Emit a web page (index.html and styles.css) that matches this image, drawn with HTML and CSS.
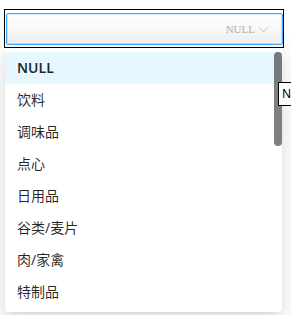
FILE: index.html
```html
<!DOCTYPE html>
<html lang="zh">
<head>
  <meta charset="UTF-8">
  <title>类别选择</title>
  <link rel="stylesheet" href="styles.css">
</head>
<body>
  <div class="frame">
    <div class="select">
      <span class="select-value">NULL</span>
      <svg class="select-arrow" width="11" height="7" viewBox="0 0 11 7">
        <path d="M0.5 0.8 L5.5 5.8 L10.5 0.8" fill="none" stroke="#bfbfbf" stroke-width="1"/>
      </svg>
    </div>
  </div>

  <div class="dropdown">
    <div class="option-list">
      <div class="option active">NULL</div>
      <div class="option">饮料</div>
      <div class="option">调味品</div>
      <div class="option">点心</div>
      <div class="option">日用品</div>
      <div class="option">谷类/麦片</div>
      <div class="option">肉/家禽</div>
      <div class="option">特制品</div>
    </div>
    <div class="scroll-thumb"></div>
  </div>

  <div class="tooltip">N</div>
</body>
</html>
```

FILE: styles.css
```css
body {
  margin: 0;
  background: #fff;
  font-family: "Noto Sans", "Noto Sans CJK SC", sans-serif;
  overflow: hidden;
}
.frame {
  margin: 9px 0 0 4px;
  width: 278px;
  height: 37px;
  border: 1px solid #000;
  padding: 0;
  box-sizing: content-box;
}
.select {
  margin: 3px 0 0 1px;
  width: 277px;
  height: 32px;
  box-sizing: border-box;
  border: 1px solid #40a9ff;
  border-radius: 2px;
  box-shadow: inset 0 0 0 1px rgba(64, 169, 255, 0.25);
  background: linear-gradient(to bottom, #fff, #f1f1f1);
  display: flex;
  align-items: center;
  justify-content: flex-end;
  gap: 3px;
  padding-right: 13px;
}
.select-value {
  font-family: "Liberation Serif", serif;
  font-size: 11px;
  color: #b0b0b0;
}
.select-arrow {
  display: block;
}
.dropdown {
  position: absolute;
  left: 5px;
  top: 48px;
  width: 277px;
  padding: 4px 0;
  background: #fff;
  border-radius: 2px 2px 4px 4px;
  box-shadow: 0 3px 6px -4px rgba(0, 0, 0, 0.12), 0 6px 16px 0 rgba(0, 0, 0, 0.08), 0 9px 28px 8px rgba(0, 0, 0, 0.05);
}
.option-list {
  height: 256px;
  overflow: hidden;
}
.option {
  height: 32px;
  box-sizing: border-box;
  padding: 5px 12px;
  line-height: 22px;
  font-size: 14px;
  color: rgba(0, 0, 0, 0.85);
}
.option.active {
  background: #e6f7ff;
  font-weight: 600;
}
.scroll-thumb {
  position: absolute;
  right: 0;
  top: 4px;
  width: 8px;
  height: 94px;
  border-radius: 99px;
  background: rgba(0, 0, 0, 0.5);
}
.tooltip {
  position: absolute;
  left: 278px;
  top: 82px;
  height: 24px;
  box-sizing: border-box;
  border: 1px solid #000;
  border-right: 0;
  background: #fff;
  padding: 0 0 0 3px;
  font-size: 12px;
  line-height: 22px;
  color: #000;
  width: 13px;
  overflow: hidden;
}
```
